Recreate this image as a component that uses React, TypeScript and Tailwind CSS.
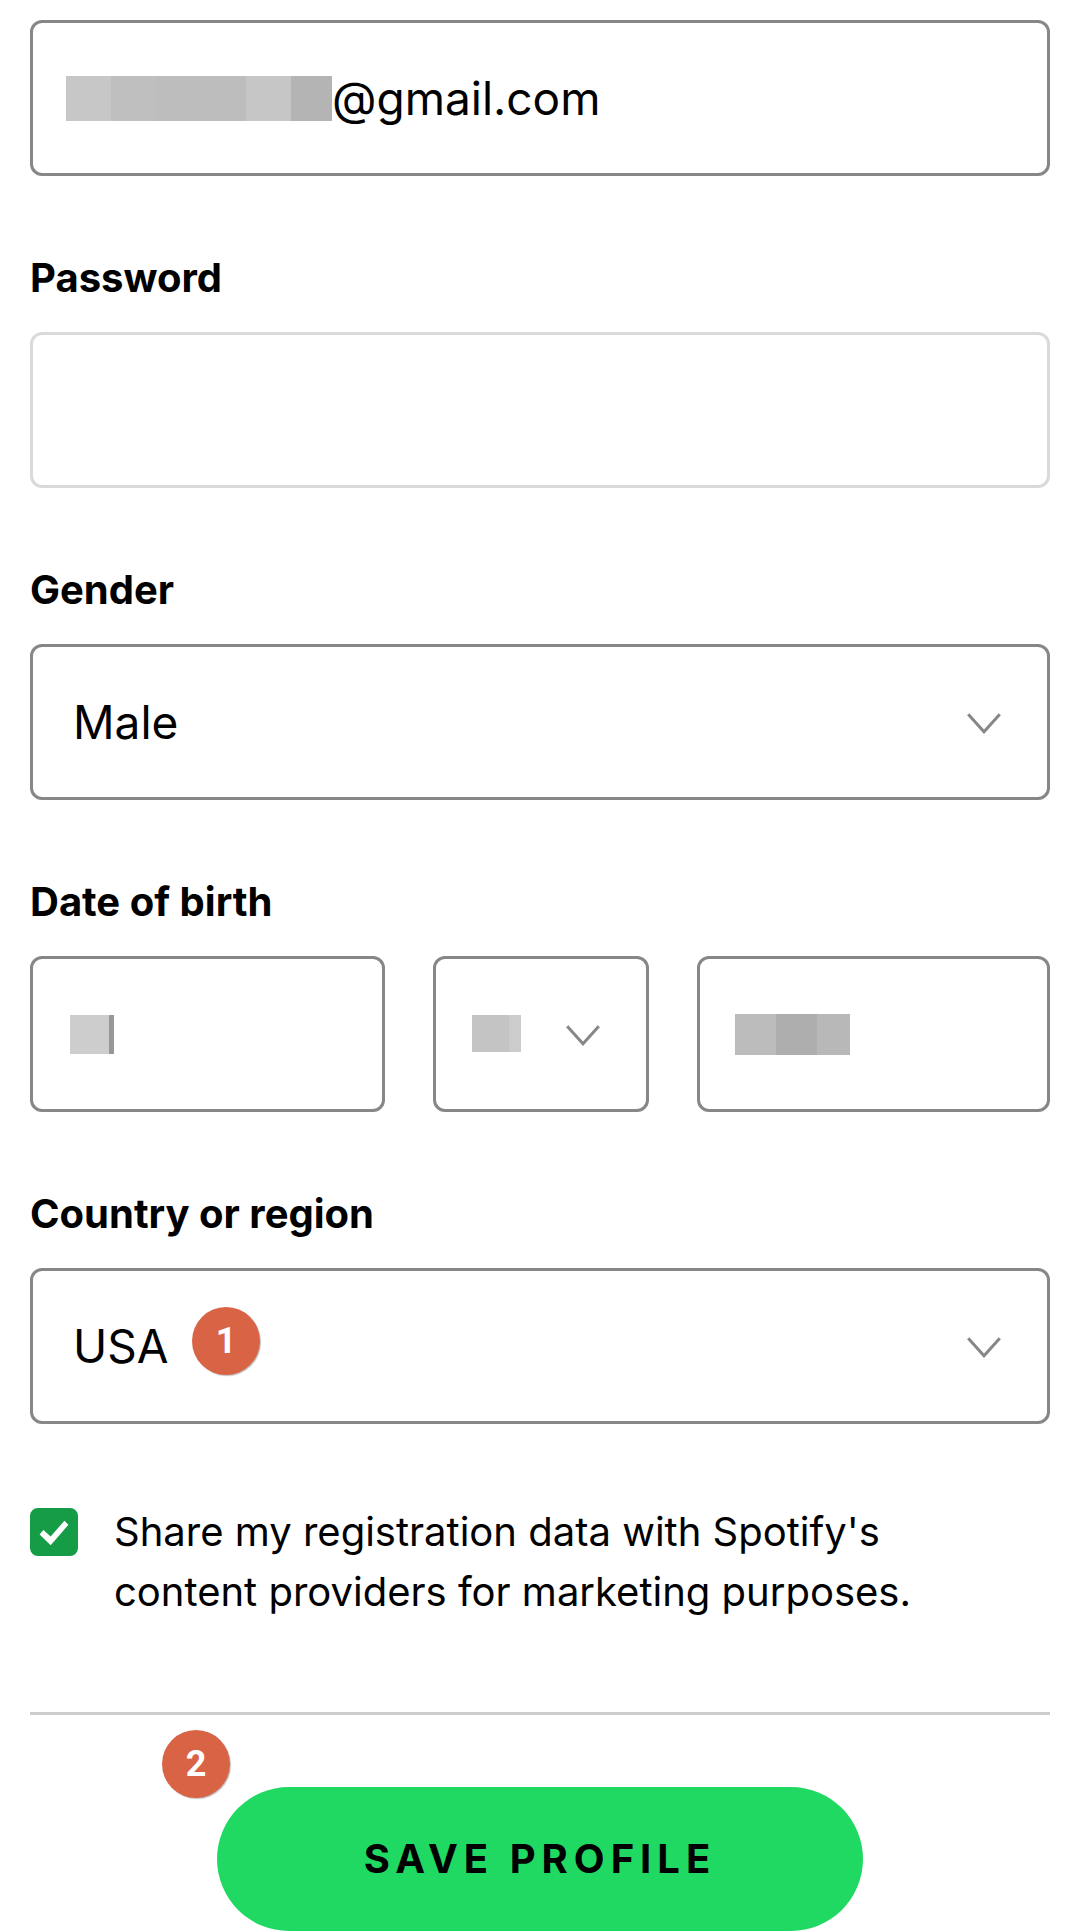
import { useState } from 'react'
import type { ReactNode } from 'react'
import clsx from 'clsx'

const MONTHS = [
  'January',
  'February',
  'March',
  'April',
  'May',
  'June',
  'July',
  'August',
  'September',
  'October',
  'November',
  'December',
]

const boxStyle = 'h-[156px] w-full rounded-xl border-[3px] border-[#878787] bg-white'

function Redacted({ blocks, className }: { blocks: string[]; className: string }) {
  return (
    <span aria-hidden="true" className={clsx('flex shrink-0', className)}>
      {blocks.map((block, i) => (
        <span key={i} className={block} />
      ))}
    </span>
  )
}

function Chevron() {
  return (
    <svg
      viewBox="0 0 34 22"
      fill="none"
      stroke="#878787"
      strokeWidth="3"
      aria-hidden="true"
      className="pointer-events-none absolute right-[49px] top-[69px] h-[22px] w-[34px]"
    >
      <path d="M1.2 1.2 17 18.8 32.8 1.2" />
    </svg>
  )
}

function Field({ id, label, children }: { id: string; label: string; children: ReactNode }) {
  return (
    <div className="mt-[72px]">
      <label htmlFor={id} className="mb-6 block text-[40px] font-bold leading-[60px]">
        {label}
      </label>
      {children}
    </div>
  )
}

function StepBadge({ step, className }: { step: number; className: string }) {
  return (
    <span
      className={clsx(
        "pointer-events-none absolute flex size-[68px] items-center justify-center rounded-full bg-[#d96445] font-['Roboto',sans-serif] text-[36px] font-bold leading-none text-white shadow-[1px_1px_1px_rgba(0,0,0,0.25)]",
        className,
      )}
    >
      {step}
    </span>
  )
}

export default function App() {
  const [email, setEmail] = useState('@gmail.com')
  const [share, setShare] = useState(true)

  return (
    <form
      onSubmit={(e) => e.preventDefault()}
      className="bg-white px-[30px] pt-5 font-['Inter',sans-serif] text-black"
    >
      <div className={clsx(boxStyle, 'flex items-center pl-[33px] pr-9')}>
        <Redacted
          className="h-[45px]"
          blocks={[
            'w-[45px] bg-[#c7c7c7]',
            'w-[45px] bg-[#bfbfbf]',
            'w-[90px] bg-[#bdbdbd]',
            'w-[45px] bg-[#c6c6c6]',
            'w-[41px] bg-[#b4b4b4]',
          ]}
        />
        <input
          type="text"
          aria-label="Email"
          value={email}
          onChange={(e) => setEmail(e.target.value)}
          className="h-full min-w-0 flex-1 bg-transparent text-[46px] outline-none"
        />
      </div>

      <Field id="password" label="Password">
        <input
          id="password"
          type="password"
          className="block h-[156px] w-full rounded-xl border-[3px] border-[#dadada] px-10 text-[46px] outline-none"
        />
      </Field>

      <Field id="gender" label="Gender">
        <div className="relative">
          <select id="gender" className={clsx(boxStyle, 'block appearance-none px-10 text-[46px]')}>
            <option>Male</option>
            <option>Female</option>
            <option>Non-binary</option>
          </select>
          <Chevron />
        </div>
      </Field>

      <Field id="day" label="Date of birth">
        <div className="flex gap-12">
          <div className={clsx(boxStyle, 'flex min-w-0 flex-1 items-center pl-[37px] pr-9')}>
            <Redacted className="h-[39px]" blocks={['w-[39px] bg-[#cdcdcd]', 'w-[5px] bg-[#979797]']} />
            <input
              id="day"
              type="text"
              inputMode="numeric"
              className="h-full min-w-0 flex-1 bg-transparent text-[46px] outline-none"
            />
          </div>
          <div className="relative w-[216px] shrink-0">
            <select
              aria-label="Month of birth"
              defaultValue=""
              className={clsx(boxStyle, 'block appearance-none px-10 text-[46px]')}
            >
              <option value="" />
              {MONTHS.map((month) => (
                <option key={month}>{month}</option>
              ))}
            </select>
            <Redacted
              className="pointer-events-none absolute left-[39px] top-[59px] h-[37px]"
              blocks={['w-[37px] bg-[#c4c4c4]', 'w-[12px] bg-[#cccccc]']}
            />
            <Chevron />
          </div>
          <div className={clsx(boxStyle, 'flex min-w-0 flex-1 items-center pl-[35px] pr-9')}>
            <Redacted
              className="h-[41px]"
              blocks={['w-[41px] bg-[#bcbcbc]', 'w-[41px] bg-[#aeaeae]', 'w-[33px] bg-[#b8b8b8]']}
            />
            <input
              type="text"
              inputMode="numeric"
              aria-label="Year of birth"
              className="h-full min-w-0 flex-1 bg-transparent text-[46px] outline-none"
            />
          </div>
        </div>
      </Field>

      <Field id="country" label="Country or region">
        <div className="relative">
          <select id="country" className={clsx(boxStyle, 'block appearance-none px-10 text-[46px]')}>
            <option>USA</option>
            <option>Canada</option>
            <option>United Kingdom</option>
          </select>
          <StepBadge step={1} className="left-[162px] top-[39px]" />
          <Chevron />
        </div>
      </Field>

      <div className="mt-[78px] flex items-start gap-9">
        <span className="relative mt-1.5 size-12 shrink-0">
          <input
            id="share"
            type="checkbox"
            checked={share}
            onChange={(e) => setShare(e.target.checked)}
            className="block size-12 appearance-none rounded-lg border-[3px] border-[#878787] checked:border-[#169c46] checked:bg-[#169c46]"
          />
          {share && (
            <svg
              viewBox="0 0 48 48"
              fill="#fff"
              aria-hidden="true"
              className="pointer-events-none absolute inset-0 size-12"
            >
              <path d="M9.6 26.4 13.4 22 20.6 28.6 34.4 12.8 38.4 16.8 20.7 37.2Z" />
            </svg>
          )}
        </span>
        <label htmlFor="share" className="max-w-[850px] text-[40px] leading-[60px]">
          Share my registration data with Spotify's
          <br />
          content providers for marketing purposes.
        </label>
      </div>

      <hr className="mt-[90px] border-t-[3px] border-[#cccccc]" />

      <div className="mt-[72px] flex justify-center">
        <div className="relative">
          <button
            type="submit"
            className="h-36 w-[646px] max-w-full rounded-full bg-[#1fd962] text-[40px] font-bold tracking-[6px]"
          >
            SAVE PROFILE
          </button>
          <StepBadge step={2} className="-left-[55px] -top-[57px]" />
        </div>
      </div>
    </form>
  )
}
